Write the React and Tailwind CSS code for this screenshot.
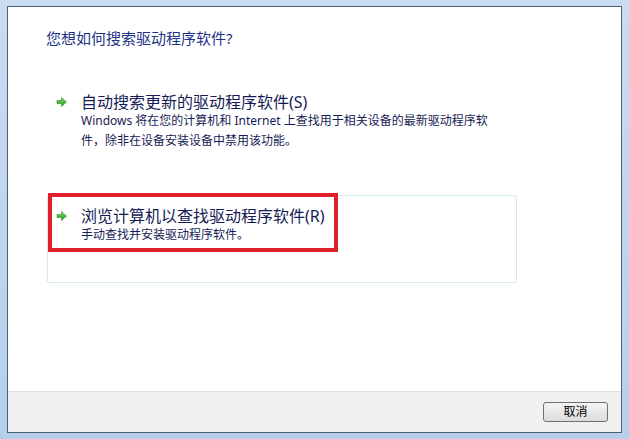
import React from 'react'

const FONT = { fontFamily: '"Noto Sans", "Noto Sans CJK SC", sans-serif' }

const GreenArrow = () => (
  <svg width="12" height="12" viewBox="0 0 12 12" className="shrink-0">
    <defs>
      <linearGradient id="ga" x1="0" y1="0" x2="0" y2="1">
        <stop offset="0" stopColor="#7fd85e" />
        <stop offset="1" stopColor="#1f9a2a" />
      </linearGradient>
    </defs>
    <path d="M1 4.5 H5.5 V1.5 L10.5 6 L5.5 10.5 V7.5 H1 Z" fill="url(#ga)" stroke="#2f8f2a" strokeWidth="0.6" strokeLinejoin="round" />
  </svg>
)

const CommandLink = ({ title, desc, boxed, children }) => (
  <div
    className={`relative w-[470px] h-[88px] border rounded-[2px] pt-[11px] pl-[8px] ${
      boxed ? 'border-[#d3ebf2]' : 'border-transparent'
    }`}
  >
    <div className="flex items-center gap-[13px] h-[18px]">
      <GreenArrow />
      <span className="text-[16px] leading-[18px] text-[#151c55]">{title}</span>
    </div>
    <div className="pl-[25px] text-[12px] leading-[20px] text-[#151c55]">{desc}</div>
    {children}
  </div>
)

export default function App() {
  return (
    <div
      className="w-[629px] h-[439px] bg-gradient-to-b from-[#c9dcf1] to-[#b5cfec] pt-[6px] pb-[6px] px-[7px]"
      style={FONT}
    >
      <div className="h-full border border-[#4f6076] flex flex-col bg-white">
        <div className="flex-1 bg-white pt-[21px] pl-[38px]">
          <div className="text-[15px] leading-[20px] text-[#1e3287]">您想如何搜索驱动程序软件?</div>

          <div className="mt-[33px] ml-[1px]">
            <CommandLink
              title="自动搜索更新的驱动程序软件(S)"
              desc={
                <>
                  Windows 将在您的计算机和 Internet 上查找用于相关设备的最新驱动程序软
                  <br />
                  件，除非在设备安装设备中禁用该功能。
                </>
              }
            />
          </div>

          <div className="mt-[26px] ml-[1px]">
            <CommandLink boxed title="浏览计算机以查找驱动程序软件(R)" desc="手动查找并安装驱动程序软件。">
              <div className="absolute left-[0px] top-[-3px] w-[290px] h-[59px] border-[4px] border-[#e0202a]" />
            </CommandLink>
          </div>
        </div>

        <div className="h-[41px] bg-[#f0f0f0] border-t border-[#dfdfdf] flex items-start justify-end pt-[10px] pr-[13px]">
          <button className="w-[65px] h-[20px] rounded-[3px] border border-[#707070] bg-gradient-to-b from-[#f4f4f4] to-[#dcdcdc] text-[12px] leading-[18px] text-black">
            取消
          </button>
        </div>
      </div>
    </div>
  )
}
